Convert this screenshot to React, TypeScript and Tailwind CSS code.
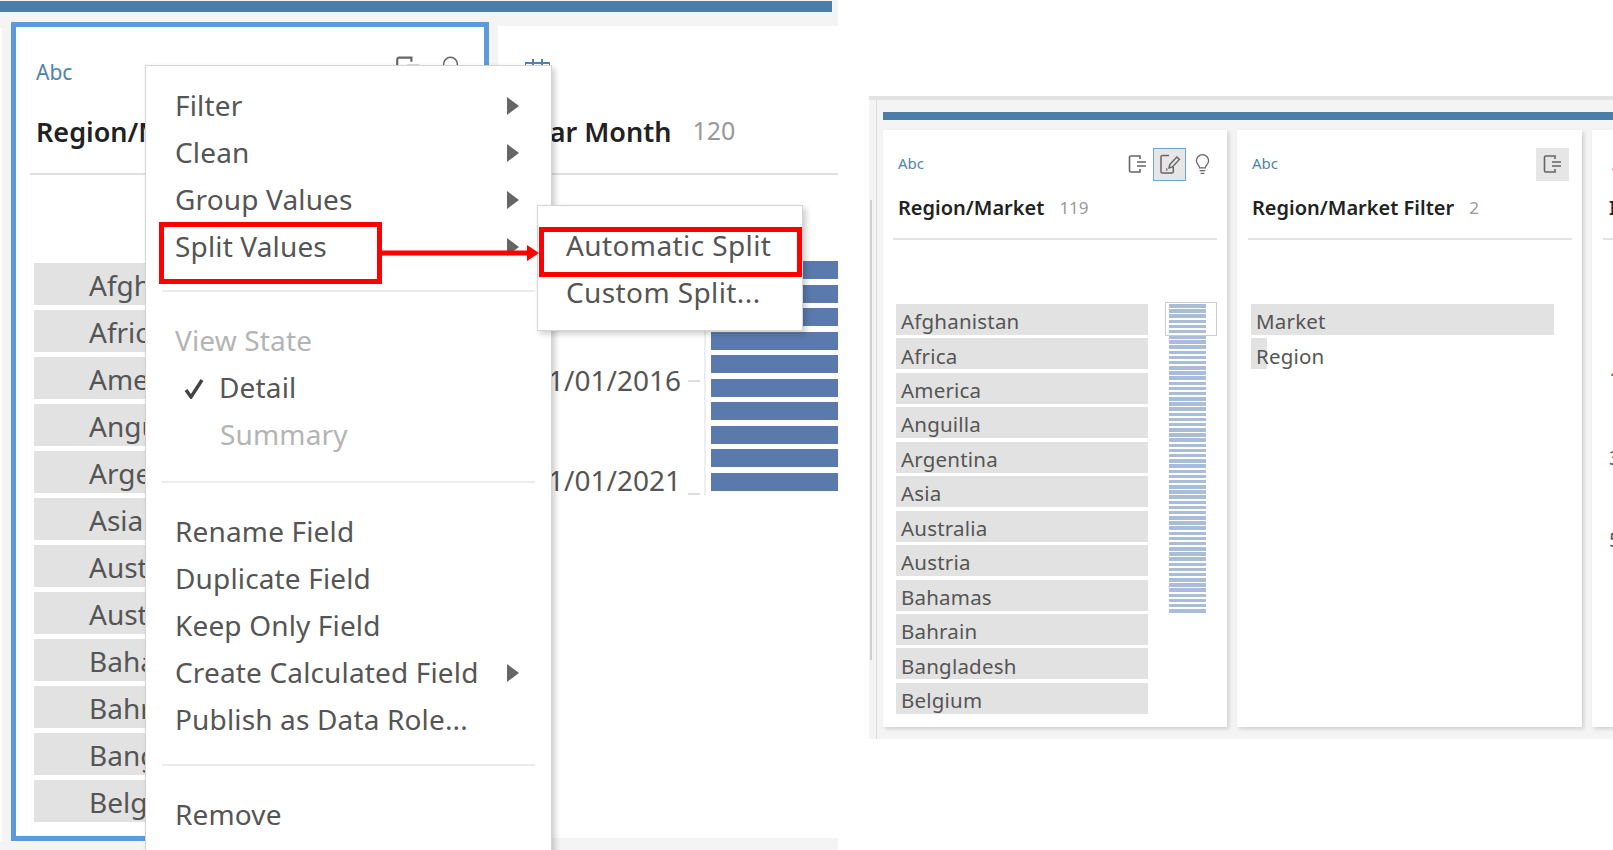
const names = ["Afghanistan", "Africa", "America", "Anguilla", "Argentina", "Asia", "Australia", "Austria", "Bahamas", "Bahrain", "Bangladesh", "Belgium"]

function FieldIcon({ className }: { className: string }) {
  return (
    <svg viewBox="0 0 19 20" fill="none" stroke="#666" strokeWidth="1.6" className={className}>
      <path d="M12 5V2H2.8A1.3 1.3 0 0 0 1.5 3.3v13.4A1.3 1.3 0 0 0 2.8 18H12v-3" />
      <path d="M9 8h9M9 12h9" strokeWidth="1.4" />
    </svg>
  )
}

function EditIcon() {
  return (
    <svg viewBox="0 0 22 22" fill="none" stroke="#666" strokeWidth="1.5" className="w-[22px] h-[22px]">
      <path d="M10 2.5H3.3A1.3 1.3 0 0 0 2 3.8v14.9A1.3 1.3 0 0 0 3.3 20H13a1.3 1.3 0 0 0 1.3-1.3V14" />
      <path d="M10 15l.8-3.5 7-7.5 2.6 2.4-7 7.5z" />
      <path d="M7 16.5h1.5" strokeWidth="2" />
    </svg>
  )
}

function BulbIcon({ className }: { className: string }) {
  return (
    <svg viewBox="0 0 16 22" fill="none" stroke="#666" strokeWidth="1.4" className={className}>
      <path d="M5 14.5c0-2.5-3.5-3.5-3.5-7.5a6.5 6.5 0 0 1 13 0c0 4-3.5 5-3.5 7.5z" />
      <path d="M5 17.5h6M6 20.5h4" />
    </svg>
  )
}

function Triangle() {
  return <span className="w-0 h-0 mt-[2px] ml-[1px] border-y-[9px] border-y-transparent border-l-[12px] border-l-[#666]" />
}

function MenuItem({ label, arrow, muted, indent }: { label: string; arrow?: boolean; muted?: boolean; indent?: boolean }) {
  return (
    <div className={`h-[47px] pb-[6px] flex items-center justify-between pr-[32px] ${indent ? "pl-[74px]" : "pl-[29px]"} ${muted ? "text-[#b4b4b4]" : "text-[#555]"}`}>
      <span>{label}</span>
      {arrow && <Triangle />}
    </div>
  )
}

function Separator({ className }: { className: string }) {
  return <div className={`h-[2px] mx-[16px] bg-[#ececec] ${className}`} />
}

function ContextMenu() {
  return (
    <div className="absolute left-[145px] top-[65px] w-[407px] h-[800px] bg-white border border-[#d4d4d4] shadow-[3px_3px_6px_rgba(0,0,0,0.2)] pt-[18px] text-[28px] tracking-[0.15px]">
      <MenuItem label="Filter" arrow />
      <MenuItem label="Clean" arrow />
      <MenuItem label="Group Values" arrow />
      <MenuItem label="Split Values" arrow />
      <Separator className="mt-[18px] mb-[27px]" />
      <MenuItem label="View State" muted />
      <div className="h-[47px] pb-[6px] flex items-center pl-[38px] text-[#555]">
        <svg viewBox="0 0 20 20" className="w-[20px] h-[20px] mt-[4px]" fill="none" stroke="#444" strokeWidth="3.4">
          <path d="M2 11l5 7L18 1" />
        </svg>
        <span className="ml-[15px]">Detail</span>
      </div>
      <MenuItem label="Summary" muted indent />
      <Separator className="mt-[21px] mb-[27px]" />
      <MenuItem label="Rename Field" />
      <MenuItem label="Duplicate Field" />
      <MenuItem label="Keep Only Field" />
      <MenuItem label="Create Calculated Field" arrow />
      <MenuItem label="Publish as Data Role..." />
      <Separator className="mt-[19px] mb-[27px]" />
      <MenuItem label="Remove" />
    </div>
  )
}

function LeftPanel() {
  const bars = Array.from({ length: 10 })
  return (
    <div className="relative w-[838px] h-[850px] shrink-0 overflow-hidden bg-[#f4f4f4]">
      <div className="h-[11px] w-[832px] mt-[1px] bg-[#4a7ea8]" />
      <div className="flex mt-[10px]">
        <div className="w-[2px] mt-[6px] bg-white" />
        <div className="ml-[9px] w-[478px] h-[819px] shrink-0 bg-white border-[5px] border-[#5b9bdc] pt-[32px]">
          <div className="h-[28px] flex items-center pl-[20px] relative text-[21px] text-[#4f84a8]">
            Abc
            <FieldIcon className="absolute left-[379px] top-[-4px] w-[26px] h-[27px]" />
            <BulbIcon className="absolute left-[426px] top-[-4px] w-[17px] h-[27px]" />
          </div>
          <div className="h-[36px] mt-[27px] pl-[20px] flex items-center text-[27px] font-semibold text-[#222]">Region/Market</div>
          <div className="h-[2px] mt-[23px] ml-[14px] mr-[12px] bg-[#e0e0e0]" />
          <div className="mt-[88px] ml-[18px] flex flex-col gap-[5px]">
            {names.map((n) => (
              <div key={n} className="w-[344px] h-[42px] bg-[#e2e2e2] pl-[55px] pt-[1px] flex items-center text-[28px] text-[#555]">{n}</div>
            ))}
          </div>
        </div>
        <div className="ml-[9px] mt-[4px] flex-1 h-[812px] bg-white">
          <div className="h-[32px] ml-[27px] mt-[28px]">
            <svg viewBox="0 0 25 8" className="w-[25px] h-[8px] mt-[4px] translate-y-[5px]" fill="none" stroke="#4f84a8" strokeWidth="2">
              <path d="M0 4h25M0 8V4M25 8V4M8 0v6M17 0v6" />
            </svg>
          </div>
          <div className="pt-[52px] h-[92px] -mt-[26px] pl-[21px] flex items-center gap-[21px]">
            <span className="text-[27px] font-semibold text-[#222]">Year Month</span>
            <span className="text-[25px] mb-[2px] text-[#999]">120</span>
          </div>
          <div className="h-[2px] mt-[21px] bg-[#e0e0e0]" />
          <div className="flex">
            <div className="w-[183px] mt-[181px] text-[28px] text-[#555] text-right">
              <div className="h-[47px] flex items-center justify-end">01/01/2016</div>
              <div className="h-[47px] mt-[53px] flex items-center justify-end">01/01/2021</div>
            </div>
            <div className="ml-[7px] mt-[155px] w-[18px] h-[165px] pr-[4px] border-r-2 border-[#eee] flex flex-col justify-between pt-[50px]">
              <div className="h-[2px] bg-[#ddd]" />
              <div className="h-[2px] bg-[#ddd]" />
            </div>
            <div className="ml-[5px] mt-[86px] flex-1 flex flex-col gap-[5.5px]">
              {bars.map((_, i) => (
                <div key={i} className="h-[18px] bg-[#5a7aae]" />
              ))}
            </div>
          </div>
        </div>
      </div>

      <ContextMenu />

      <div className="absolute left-[537px] top-[205px] w-[266px] h-[126px] bg-white border border-[#d4d4d4] shadow-[3px_3px_6px_rgba(0,0,0,0.2)] pt-[15px] pl-[28px] text-[28px] tracking-[0.4px] text-[#555]">
        <div className="h-[47px] flex items-center">Automatic Split</div>
        <div className="h-[47px] flex items-center">Custom Split...</div>
      </div>

      <div className="absolute left-[159px] top-[222px] w-[223px] h-[62px] border-[5px] border-[#ff0000]" />
      <div className="absolute left-[539px] top-[227px] w-[263px] h-[50px] border-[5px] border-[#ff0000]" />
      <svg viewBox="0 0 157 16" className="absolute left-[382px] top-[245px] w-[157px] h-[16px]">
        <path d="M0 5.5h145v-5.5l12 8-12 8v-5.5H0z" fill="#ff0000" />
      </svg>
    </div>
  )
}

function Rows({ items, width }: { items: { name: string; bar: number }[]; width: string }) {
  return (
    <div className={`flex flex-col gap-[3.45px] ${width}`}>
      {items.map((it) => (
        <div key={it.name} className="relative h-[31px] flex items-center pl-[5px] pt-[4px] text-[20.5px] tracking-[0.2px] text-[#555]">
          <div className="absolute left-0 top-0 bottom-0 bg-[#e2e2e2]" style={{ width: it.bar }} />
          <span className="relative">{it.name}</span>
        </div>
      ))}
    </div>
  )
}

function RightPanel() {
  const stripes = Array.from({ length: 60 })
  return (
    <div className="ml-[31px] mt-[96px] flex-1 h-[643px] bg-[#f4f4f4] border-t-[4px] border-[#e2e2e2] overflow-hidden flex">
      <div className="w-[7px] shrink-0 pt-[100px]">
        <div className="w-[2px] h-[460px] ml-[1px] bg-[#cfcfcf]" />
      </div>
      <div className="flex-1 border-l border-[#dcdcdc] pl-[6px] min-w-0">
        <div className="h-[8px] mt-[12px] bg-[#4a7ea8]" />
        <div className="flex gap-[10px] mt-[10px]">
          <div className="w-[344px] h-[597px] shrink-0 bg-white shadow-[2px_2px_4px_rgba(0,0,0,0.15)] pt-[17px]">
            <div className="h-[34px] flex items-center pl-[15px] pr-[17px]">
              <span className="text-[15px] mb-[2px] text-[#4f84a8] mr-auto">Abc</span>
              <FieldIcon className="w-[19px] h-[20px]" />
              <div className="ml-[6px] w-[33px] h-[33px] bg-[#e6e6e6] border border-[#6aa5e0] flex items-center justify-center"><EditIcon /></div>
              <BulbIcon className="ml-[9px] w-[15px] h-[21px]" />
            </div>
            <div className="h-[24px] mt-[15px] pl-[15px] flex items-center gap-[15px]">
              <span className="text-[20px] font-semibold text-[#222]">Region/Market</span>
              <span className="text-[17px] text-[#999]">119</span>
            </div>
            <div className="h-[2px] mt-[18px] ml-[10px] w-[324px] bg-[#e4e4e4]" />
            <div className="flex mt-[64px] ml-[13px]">
              <Rows items={names.map((name) => ({ name, bar: 252 }))} width="w-[252px]" />
              <div className="relative ml-[21px] w-[37px] h-[312px] flex flex-col gap-[1.68px]">
                <div className="absolute left-[-4px] top-[-2px] w-[52px] h-[34px] border border-[#ccc]" />
                {stripes.map((_, i) => (
                  <div key={i} className="h-[3.5px] shrink-0 bg-[#a9bdd9]" />
                ))}
              </div>
            </div>
          </div>
          <div className="w-[345px] h-[597px] shrink-0 bg-white shadow-[2px_2px_4px_rgba(0,0,0,0.15)] pt-[17px]">
            <div className="h-[34px] flex items-center pl-[15px] pr-[13px]">
              <span className="text-[15px] mb-[2px] text-[#4f84a8] mr-auto">Abc</span>
              <div className="w-[33px] h-[33px] bg-[#e6e6e6] flex items-center justify-center"><FieldIcon className="w-[19px] h-[20px]" /></div>
            </div>
            <div className="h-[24px] mt-[15px] pl-[15px] flex items-center gap-[15px]">
              <span className="text-[20px] font-semibold text-[#222]">Region/Market Filter</span>
              <span className="text-[17px] text-[#999]">2</span>
            </div>
            <div className="h-[2px] mt-[18px] ml-[11px] w-[324px] bg-[#e4e4e4]" />
            <div className="mt-[64px] ml-[14px]">
              <Rows items={[{ name: "Market", bar: 303 }, { name: "Region", bar: 16 }]} width="w-[303px]" />
            </div>
          </div>
          <div className="flex-1 h-[597px] min-w-0 overflow-hidden bg-white shadow-[2px_2px_4px_rgba(0,0,0,0.15)] pt-[17px]">
            <div className="h-[34px] flex items-center pl-[20px] text-[15px] text-[#4f84a8]">Abc</div>
            <div className="h-[24px] mt-[15px] pl-[17px] flex items-center text-[20px] font-semibold text-[#222]">Index</div>
            <div className="h-[2px] mt-[18px] ml-[11px] bg-[#e4e4e4]" />
            <div className="pl-[17px] mt-[124px] text-[20px] text-[#555]">
              <div className="h-[28px]">1</div>
              <div className="h-[28px] mt-[51px]">3</div>
              <div className="h-[28px] mt-[54px]">5</div>
            </div>
          </div>
        </div>
      </div>
    </div>
  )
}

export default function App() {
  return (
    <div className="flex w-[1613px] h-[850px] overflow-hidden bg-white font-['Noto_Sans',sans-serif]">
      <LeftPanel />
      <RightPanel />
    </div>
  )
}
